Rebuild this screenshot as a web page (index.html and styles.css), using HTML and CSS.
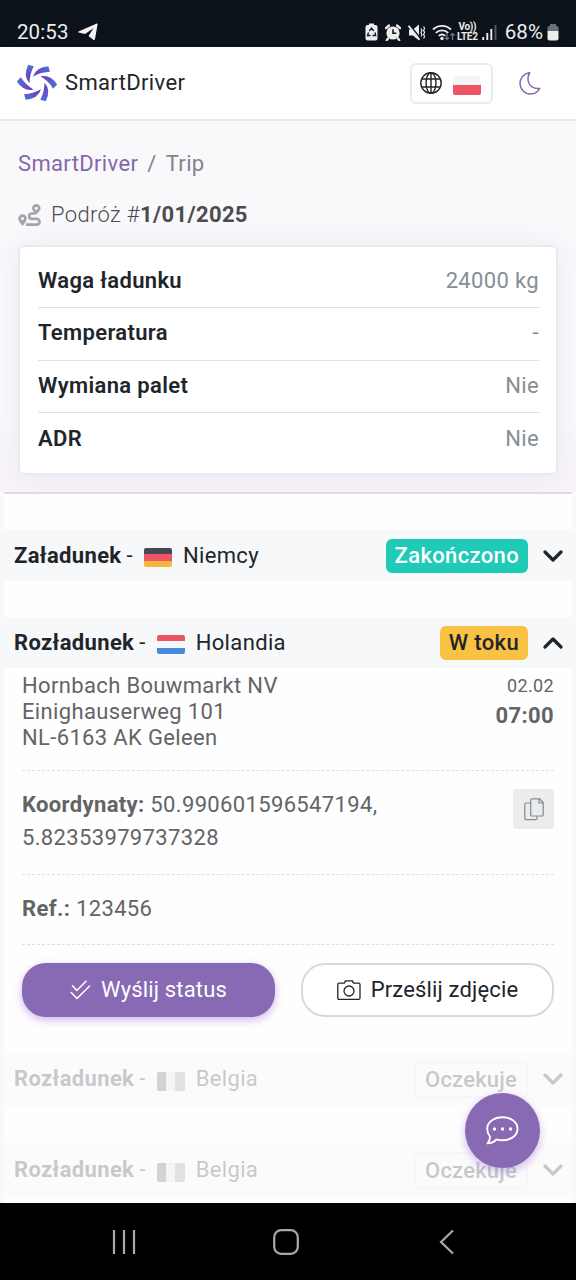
FILE: index.html
```html
<!DOCTYPE html>
<html lang="pl">
<head>
<meta charset="utf-8">
<title>SmartDriver</title>
<link rel="stylesheet" href="styles.css">
</head>
<body>
<div class="statusbar">
  <span class="clock">20:53</span>
  <svg class="telegram" width="20" height="18" viewBox="0 0 20 18"><path d="M.5 8.600 18.200.7c1-.4 1.500 0 1.300 1L17 16c-.2 1-.9 1.200-1.700.7L10.500 13l5-7.800L7 11 .6 9.600c-.6-.2-.6-.7-.1-1z" fill="#f4f4f4"/></svg>
  <div class="status-icons">
    <svg width="13" height="18" viewBox="0 0 13 18"><path d="M4 2V.5h5V2h1.500Q12.500 2 12.500 4v11.500q0 2-2 2h-8q-2 0-2-2V4q0-2 2-2z" fill="#eee"/><path d="M4.300 8 6.500 5l2.200 3M10 9.500l.7 3H7.500M5.500 12.500h-3l1-3" fill="none" stroke="#111820" stroke-width="1.300"/></svg>
    <svg width="16" height="17" viewBox="0 0 16 17"><circle cx="8" cy="9" r="6.600" fill="#eee"/><path d="M1 4.200 4 1.500M15 4.200 12 1.500M3 14.500l-1.200 1.600M13 14.500l1.200 1.600" stroke="#eee" stroke-width="2.400" stroke-linecap="round"/><path d="M8 5.300V9.300h3.300" fill="none" stroke="#111820" stroke-width="1.600"/></svg>
    <svg width="17" height="17" viewBox="0 0 17 17"><path d="M1 5.500h4L11 .5v16L5 11.500H1z" fill="#eee"/><path d="M1.800 1 12.500 14.500" stroke="#0c131a" stroke-width="1.600"/><path d="M.6 1.800 11.500 15.800" stroke="#eee" stroke-width="1.800"/><path d="M13 4.500l1 2-1 2 1 2-1 2M15.600 2.500l1 2-1 2 1 2-1 2 1 2-1 2" fill="none" stroke="#eee" stroke-width="1.200"/></svg>
    <svg width="23" height="17" viewBox="0 0 23 17"><path d="M1 5.500a13 13 0 0 1 18 0M3.800 8.800a9 9 0 0 1 12.400 0M6.700 11.900a5 5 0 0 1 6.600 0" fill="none" stroke="#eee" stroke-width="1.800"/><circle cx="10" cy="14.500" r="1.700" fill="#eee"/><path d="M15 9v6.500M13 13.500l2 2 2-2M20.500 16V9.500M18.500 11.500l2-2 2 2" fill="none" stroke="#777b80" stroke-width="1.200"/></svg>
    <span class="volte"><span>Vo))</span><span>LTE2</span></span>
    <svg width="15" height="17" viewBox="0 0 15 17"><path d="M1.200 13v3M5.300 9v7M9.300 5v11" stroke="#eee" stroke-width="1.900"/><path d="M13.500 1v15" stroke="#555b61" stroke-width="1.900"/></svg>
  </div>
  <span class="percent">68%</span>
  <svg class="battery" width="12" height="17" viewBox="0 0 12 17"><path d="M3 2V0h6v2h1q1.500 0 1.500 1.500V7H.5V3.500Q.5 2 2 2z" fill="#6d7276"/><path d="M.5 7h11v7.500q0 2-2 2h-7q-2 0-2-2z" fill="#eee"/></svg>
</div>

<header class="topbar">
  <svg class="logo" width="40" height="38" viewBox="-20 -19 40 38">
    <defs>
      <linearGradient id="blade" gradientUnits="userSpaceOnUse" x1="-7" y1="-18" x2="-8" y2="0"><stop offset="0" stop-color="#4773d4"/><stop offset=".45" stop-color="#6155cc"/><stop offset="1" stop-color="#663eaf"/></linearGradient>
      <path id="fin" d="M-8.800-18.200-3.200-16.800Q-7.400-9-7.500.3-14.300-7-8.800-18.200z" fill="url(#blade)"/>
    </defs>
    <use href="#fin"/><use href="#fin" transform="rotate(60)"/><use href="#fin" transform="rotate(120)"/><use href="#fin" transform="rotate(180)"/><use href="#fin" transform="rotate(240)"/><use href="#fin" transform="rotate(300)"/>
  </svg>
  <span class="brand">SmartDriver</span>
  <div class="lang">
    <svg width="22" height="22" viewBox="0 0 22 22" fill="none" stroke="#212529" stroke-width="1.400"><circle cx="11" cy="11" r="10.200"/><ellipse cx="11" cy="11" rx="5" ry="10.200"/><path d="M11 .8v20.400M2 7h18M2 15h18"/></svg>
    <span class="flag flag-pl"></span>
  </div>
  <svg class="moon" width="22" height="24" viewBox="0 0 22 24"><path d="M10.800 1.500C4.500 2.500.9 7.300 1 12.500 1.200 18.500 5.800 23 11.500 23c4 0 7.500-2.200 9.200-5.600-6 .8-10.700-2.400-11.500-7.400C8.700 7 9.300 3.800 10.800 1.500z" fill="none" stroke="#8467ad" stroke-width="1.400" stroke-linejoin="round"/></svg>
</header>

<main class="page">
  <section class="intro">
    <nav class="crumbs"><a class="crumb-link">SmartDriver</a><span class="slash">/</span><span>Trip</span></nav>
    <h1 class="trip">
      <svg width="23" height="23" viewBox="0 0 23 23"><path d="M4.500 22S.2 17.300.2 14.600a4.300 4.300 0 0 1 8.600 0C8.800 17.300 4.500 22 4.500 22z" fill="#a5a4a8"/><circle cx="4.500" cy="14.600" r="1.500" fill="#f9f8fb"/><path d="M18.300 10.500S14 6.800 14 4.300a4.300 4.300 0 0 1 8.600 0c0 2.500-4.300 6.200-4.300 6.200z" fill="#a5a4a8"/><circle cx="18.300" cy="4.300" r="1.600" fill="#f9f8fb"/><path d="M17.500 9.500h-3.700a2.600 2.600 0 0 0 0 5.300h4.800a2.900 2.900 0 0 1 0 5.900H8" fill="none" stroke="#a5a4a8" stroke-width="2.700"/></svg>
      <span class="trip-text">Podróż #<b>1/01/2025</b></span>
    </h1>
    <dl class="card">
      <div class="row"><dt>Waga ładunku</dt><dd>24000 kg</dd></div>
      <div class="row"><dt>Temperatura</dt><dd>-</dd></div>
      <div class="row"><dt>Wymiana palet</dt><dd>Nie</dd></div>
      <div class="row"><dt>ADR</dt><dd>Nie</dd></div>
    </dl>
  </section>

  <section class="stops">
    <div class="stop">
      <b>Załadunek</b><span class="dash strong">-</span><span class="flag flag-de"></span><span class="country">Niemcy</span>
      <span class="badge done">Zakończono</span>
      <svg class="chev" width="20" height="12" viewBox="0 0 20 12"><path d="M2 2l8 8 8-8"/></svg>
    </div>
    <div class="stop">
      <b>Rozładunek</b><span class="dash">-</span><span class="flag flag-nl"></span><span class="country">Holandia</span>
      <span class="badge active">W toku</span>
      <svg class="chev" width="20" height="12" viewBox="0 0 20 12"><path d="M2 10l8-8 8 8"/></svg>
    </div>
    <div class="detail">
      <div class="block place">
        <address>Hornbach Bouwmarkt NV<br>Einighauserweg 101<br>NL-6163 AK Geleen</address>
        <div class="when"><span>02.02</span><b>07:00</b></div>
      </div>
      <div class="block coords">
        <p><b>Koordynaty:</b> 50.990601596547194,<br>5.82353979737328</p>
        <button class="copy"><svg width="20" height="23" viewBox="0 0 20 23" fill="none" stroke="#7e8a95" stroke-width="1.200"><path d="M8 .8h7.500l3.700 3.700v12.200q0 1.300-1.300 1.300H8q-1.300 0-1.300-1.300V2.100Q6.700.8 8 .8zM15 .8V5h4.200"/><path d="M6.700 5H2.100Q.8 5 .8 6.300v14q0 1.300 1.300 1.300h9.600q1.300 0 1.300-1.300V18"/></svg></button>
      </div>
      <div class="block ref"><b>Ref.:</b> 123456</div>
      <div class="actions">
        <button class="btn primary"><svg width="21" height="20" viewBox="0 0 21 20" fill="none" stroke="#fff" stroke-width="1.500" stroke-linecap="round" stroke-linejoin="round"><path d="M2.500 5.800 6.800 10.500 16 1.200M1.200 12.500 7 18.500 19.600 6"/></svg><span>Wyślij status</span></button>
        <button class="btn outline"><svg width="24" height="20" viewBox="0 0 24 20" fill="none" stroke="#212529" stroke-width="1.300" stroke-linejoin="round"><path d="M2.200 3.200H7L8.200 2V.8h7.500V2l1.200 1.200h4.600q1.500 0 1.500 1.500V18q0 1.300-1.300 1.300H2Q.8 19.300.8 18V4.600Q.8 3.200 2.200 3.200z"/><circle cx="12" cy="11" r="5"/></svg><span>Prześlij zdjęcie</span></button>
      </div>
    </div>
    <div class="stop pending">
      <b>Rozładunek</b><span class="dash">-</span><span class="flag flag-be"></span><span class="country">Belgia</span>
      <span class="badge wait">Oczekuje</span>
      <svg class="chev" width="20" height="12" viewBox="0 0 20 12"><path d="M2 2l8 8 8-8"/></svg>
    </div>
    <div class="stop pending">
      <b>Rozładunek</b><span class="dash strong">-</span><span class="flag flag-be"></span><span class="country">Belgia</span>
      <span class="badge wait">Oczekuje</span>
      <svg class="chev" width="20" height="12" viewBox="0 0 20 12"><path d="M2 2l8 8 8-8"/></svg>
    </div>
  </section>
</main>

<button class="chat"><svg width="33" height="29" viewBox="0 0 33 29"><path d="M16.500 1.300C25 1.300 31.500 6 31.500 12.700S25 24.300 16.500 24.300c-2.300 0-4.200-.3-6-.9C8.500 25.800 5.500 27.400 1.500 27.400c2-2 2.600-4.200 2.500-6.700C2.200 18.500 1.200 16 1.200 12.700 1.200 6 8 1.300 16.500 1.300z" fill="none" stroke="#fff" stroke-width="1.900" stroke-linejoin="round"/><circle cx="8.500" cy="13" r="1.700" fill="#fff"/><circle cx="16.500" cy="13" r="1.700" fill="#fff"/><circle cx="24.500" cy="13" r="1.700" fill="#fff"/></svg></button>

<footer class="navbar">
  <svg width="26" height="26" viewBox="0 0 26 26"><path d="M3 1v24M13 1v24M23 1v24" stroke="#aaa" stroke-width="2.200"/></svg>
  <svg width="26" height="26" viewBox="0 0 26 26"><rect x="1.200" y="1.200" width="23.600" height="23.600" rx="7" fill="none" stroke="#aaa" stroke-width="2.200"/></svg>
  <svg width="26" height="26" viewBox="0 0 26 26"><path d="M19 1.500 7 13l12 11.500" fill="none" stroke="#aaa" stroke-width="2.200"/></svg>
</footer>
</body>
</html>
```
FILE: styles.css
```css
* { box-sizing: border-box; }
body {
  margin: 0;
  width: 576px;
  height: 1280px;
  overflow: hidden;
  display: flex;
  flex-direction: column;
  position: relative;
  font-family: Roboto, sans-serif;
  font-size: 22px;
  letter-spacing: .35px;
  line-height: 26px;
  color: #212529;
  background: #f9f8fb;
}
svg { display: block; flex: none; }
button { font: inherit; letter-spacing: inherit; padding: 0; border: 0; }
b { font-weight: 700; }

.statusbar {
  height: 47px;
  flex: none;
  background: #0c131a;
  color: #eee;
  display: flex;
  align-items: center;
  padding: 17px 17px 0 17px;
  font-size: 20.500px;
  letter-spacing: .1px;
}
.telegram { margin-left: 9px; }
.status-icons { display: flex; align-items: center; margin-left: auto; gap: 7px; }
.volte { display: flex; flex-direction: column; font-size: 10px; line-height: 10px; letter-spacing: -.3px; font-weight: 700; text-align: center; margin: 0 -3px 0 -5px; }
.percent { margin: 0 4px 0 8px; }

.topbar {
  height: 74px;
  flex: none;
  background: #fff;
  border-bottom: 2px solid #e9e8ed;
  display: flex;
  align-items: center;
  padding: 0 35px 0 17px;
  box-shadow: 0 2px 24px rgba(70, 50, 110, .07);
}
.brand { margin-left: 8px; }
.lang {
  margin-left: auto;
  width: 83px;
  height: 41px;
  border: 2px solid #ebebee;
  border-radius: 6px;
  display: flex;
  align-items: center;
  justify-content: space-between;
  padding: 0 10px 0 8px;
}
.lang .flag { margin-top: 5px; }
.moon { margin-left: 26px; }

.flag { width: 28px; height: 19px; border-radius: 2px; flex: none; }
.flag-pl { background: linear-gradient(#f5f5f8 50%, #ec5565 50%); }
.flag-de { background: linear-gradient(#434a54 34%, #ec5565 34% 66%, #f6b53c 66%); }
.flag-nl { background: linear-gradient(#ec5565 34%, #f5f7fa 34% 66%, #4a89dc 66%); }
.flag-be { background: linear-gradient(90deg, #434a54 33%, #e2ded2 33% 66%, #8a8a8a 66%); }

.page { flex: 1; min-height: 0; overflow: hidden; }
.intro { height: 371px; padding: 30px 18px 0; background: linear-gradient(#f9f8fb 80%, #f7f2f8); }
.crumbs { display: flex; color: #7d868a; }
.crumb-link { color: #8467ad; }
.slash { margin: 0 9px; }
.trip { display: flex; align-items: center; gap: 10px; margin: 25px 0 0; font-size: 22px; font-weight: 300; color: #4c4c50; }
.card {
  margin: 17px 0 0;
  width: 540px;
  height: 230px;
  background: #fff;
  border: 2px solid #e9e9ee;
  border-radius: 6px;
  padding: 9px 17px 0 18px;
  box-shadow: 0 0 24px rgba(60, 50, 110, .07);
}
.row { display: flex; justify-content: space-between; align-items: center; height: 52.300px; padding-bottom: 1px; border-bottom: 1px solid #e1e2e5; }
.row:last-child { border: 0; }
dd { margin: 0; color: #868e94; }
dt { font-weight: 600; }

.stops { padding: 0 4px; background: linear-gradient(90deg, #f9f9fb 4px, #fefefe 4px 572px, #f9f9fb 572px); height: 720px; }
.stops::before { content: ""; display: block; height: 2px; background: #dddde2; }
.stop {
  height: 51px;
  margin: 36px -4px 0;
  padding: 0 13px 0 14px;
  background: #f6f8fa;
  display: flex;
  align-items: center;
}
.dash { margin: 0 11px 0 5px; }
.country { margin-left: 11px; }
.stop .flag { margin-top: 4px; }
.badge {
  margin-left: auto;
  height: 34px;
  line-height: 33px;
  border-radius: 6px;
  padding: 0 9px;
  font-weight: 500;
}
.done { background: #1fcab7; color: #fff; }
.active { background: #fac244; }
.chev { margin-left: 15px; fill: none; stroke: #212529; stroke-width: 3.200; stroke-linecap: round; stroke-linejoin: round; }
.detail { height: 384px; padding: 5px 18px 0; color: #636466; }
.block { border-bottom: 1px dashed #dfdfe0; }
.place { height: 98px; display: flex; justify-content: space-between; }
address { font-style: normal; }
.when { display: flex; flex-direction: column; text-align: right; }
.when span { font-size: 18px; }
.when b { margin-top: 4px; }
.coords { height: 104px; display: flex; justify-content: space-between; padding-top: 18px; }
.coords p { margin: 0; line-height: 32.500px; }
.copy { width: 41px; height: 40px; background: #ececed; border-radius: 4px; display: flex; align-items: center; justify-content: center; }
.ref { height: 70px; line-height: 67px; }
.actions { display: flex; gap: 26px; margin-top: 18px; letter-spacing: .15px; }
.btn { width: 253px; height: 54px; border-radius: 24px; display: flex; align-items: center; justify-content: center; gap: 10px; background: #fff; color: #212529; }
.primary { background: #8869b3; color: #fff; box-shadow: 0 3px 8px rgba(136, 80, 200, .4); }
.outline { border: 2px solid #d9d9dc; }
.pending { height: 54px; margin: 0 0 37px; padding: 0 9px 0 10px; background: #fbfbfc; }
.pending > * { opacity: .23; }
.pending .badge { letter-spacing: .2px; }
.wait { border: 2px solid #ececec; background: #fff; height: 37px; }

.chat {
  position: absolute;
  left: 465px;
  top: 1093px;
  width: 75px;
  height: 75px;
  border-radius: 50%;
  background: #8869b3;
  display: flex;
  align-items: center;
  justify-content: center;
  box-shadow: 0 3px 9px rgba(136, 80, 200, .4);
}
.navbar { height: 77px; flex: none; background: #000; display: flex; justify-content: space-between; align-items: center; padding: 0 116px 0 111px; }
```
